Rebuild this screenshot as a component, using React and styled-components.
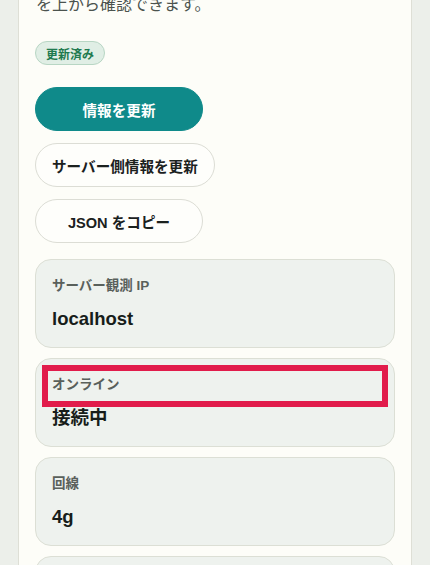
import React from 'react';
import styled, { createGlobalStyle } from 'styled-components';

const GlobalStyle = createGlobalStyle`
  html, body {
    margin: 0;
    padding: 0;
    background: #ecefea;
    font-family: "Liberation Sans", "Noto Sans CJK JP", sans-serif;
    color: #1b211e;
  }
  body {
    height: 565px;
    overflow: hidden;
  }
`;

const Page = styled.div`
  padding: 0 18px;
  margin-top: -36px;
`;

const Panel = styled.section`
  background: #fdfdf8;
  border-left: 1px solid #dedfd6;
  border-right: 1px solid #dedfd6;
  padding: 0 16px 40px;
  display: flex;
  flex-direction: column;
  align-items: flex-start;
`;

const Lead = styled.p`
  margin: 0;
  font-size: 16px;
  line-height: 27px;
  color: #4b534e;
  padding-left: 1px;
`;

const Badge = styled.span`
  margin-top: 23px;
  display: inline-flex;
  align-items: center;
  height: 24px;
  box-sizing: border-box;
  padding: 0 10px;
  border-radius: 999px;
  background: #e0eee5;
  border: 1px solid #b8d6c4;
  color: #1f7a4f;
  font-size: 12px;
  font-weight: 700;
`;

const Actions = styled.div`
  margin-top: 22px;
  display: flex;
  flex-direction: column;
  align-items: flex-start;
  gap: 12px;
`;

const Button = styled.button`
  min-width: 168px;
  height: 44px;
  padding: 0 16px;
  border-radius: 999px;
  font-family: inherit;
  font-size: 14.6px;
  font-weight: 700;
  cursor: pointer;
  border: 1px solid ${(p) => (p.$primary ? '#0f8a8a' : '#dcddd5')};
  background: ${(p) => (p.$primary ? '#0f8a8a' : '#fefefb')};
  color: ${(p) => (p.$primary ? '#ffffff' : '#1b211e')};
`;

const Stats = styled.div`
  margin-top: 16px;
  align-self: stretch;
  display: flex;
  flex-direction: column;
  gap: 10px;
`;

const Card = styled.div`
  position: relative;
  background: #eef2ee;
  border: 1px solid #dcdfd5;
  border-radius: 16px;
  padding: 16px;
  display: flex;
  flex-direction: column;
  gap: 10px;
`;

const Label = styled.div`
  font-size: 13.5px;
  line-height: 20px;
  font-weight: 700;
  color: #59605b;
`;

const Value = styled.div`
  font-size: 18.5px;
  line-height: 25px;
  font-weight: 700;
  color: #171d1a;
`;

const Highlight = styled.div`
  position: absolute;
  left: 6px;
  right: 6px;
  top: 6px;
  height: 42px;
  box-sizing: border-box;
  border: 6px solid #e11c4b;
  pointer-events: none;
`;

const stats = [
  { label: 'サーバー観測 IP', value: 'localhost' },
  { label: 'オンライン', value: '接続中', marked: true },
  { label: '回線', value: '4g' },
  { label: 'ダウンリンク', value: '10 Mbps' },
];

export default function App() {
  return (
    <>
      <GlobalStyle />
      <Page>
        <Panel>
          <Lead>
            ネットワークの状態や接続情報
            <br />
            を上から確認できます。
          </Lead>
          <Badge>更新済み</Badge>
          <Actions>
            <Button $primary>情報を更新</Button>
            <Button>サーバー側情報を更新</Button>
            <Button>JSON をコピー</Button>
          </Actions>
          <Stats>
            {stats.map((s) => (
              <Card key={s.label}>
                {s.marked && <Highlight />}
                <Label>{s.label}</Label>
                <Value>{s.value}</Value>
              </Card>
            ))}
          </Stats>
        </Panel>
      </Page>
    </>
  );
}
